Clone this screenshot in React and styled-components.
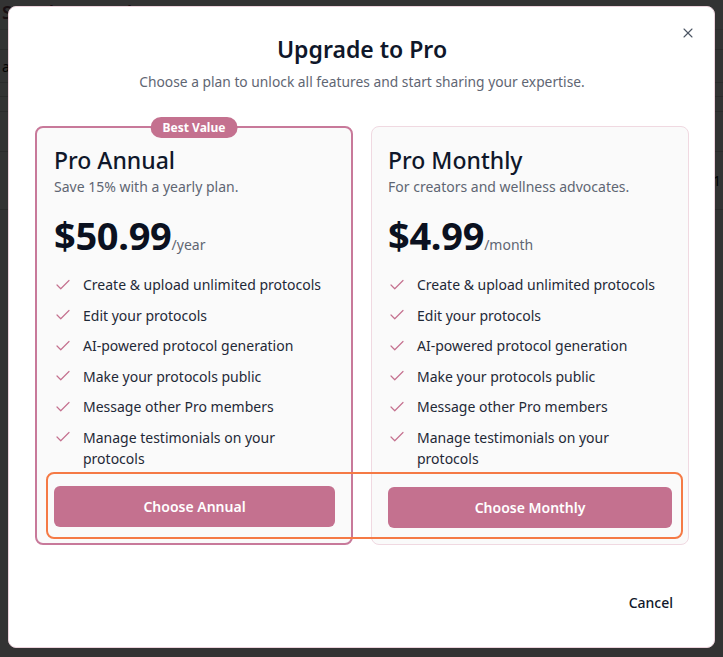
import React from "react";
import styled, { createGlobalStyle } from "styled-components";
import { Check, X } from "lucide-react";

const GlobalStyle = createGlobalStyle`
  * {
    box-sizing: border-box;
  }
  html, body {
    margin: 0;
    padding: 0;
    background: #ffffff;
    font-family: "Segoe UI", "Noto Sans", "Open Sans", sans-serif;
    color: #0f172a;
  }
`;

// page behind the dialog (dimmed)
const Page = styled.div`
  width: 723px;
  height: 657px;
  overflow: hidden;
  background: #ffffff;
`;

const PageTitle = styled.div`
  font-size: 18px;
  font-weight: 600;
  color: #7a4a5c;
  height: 30px;
  line-height: 24px;
  padding-left: 2px;
  border-bottom: 1px solid #e5e5e5;
`;

const PageRow = styled.div`
  height: ${(p) => p.h}px;
  border-bottom: 1px solid #d8d8d8;
  font-size: 14px;
  color: #111;
  display: flex;
  align-items: center;
  justify-content: space-between;
  padding: 0 2px;
`;

const Backdrop = styled.div`
  position: fixed;
  inset: 0;
  background: rgba(0, 0, 0, 0.8);
`;

const Modal = styled.div`
  position: fixed;
  left: 8px;
  top: 6px;
  width: 707px;
  height: 642px;
  background: #ffffff;
  border: 1px solid #ecd3dc;
  border-radius: 8px;
  padding: 26px 25px 25px 26px;
  display: flex;
  flex-direction: column;
`;

const CloseButton = styled.button`
  position: absolute;
  top: 17px;
  right: 17px;
  width: 18px;
  height: 18px;
  padding: 0;
  border: none;
  background: none;
  color: #4b5563;
  display: flex;
  align-items: center;
  justify-content: center;
  cursor: pointer;
`;

const Header = styled.div`
  display: flex;
  flex-direction: column;
  align-items: center;
  gap: 7px;
`;

const Title = styled.h2`
  margin: 0;
  font-size: 23px;
  line-height: 32px;
  font-weight: 600;
  color: #0f172a;
`;

const Subtitle = styled.p`
  margin: 0;
  font-size: 13.8px;
  line-height: 20px;
  color: #5f6673;
`;

const Plans = styled.div`
  display: grid;
  grid-template-columns: 318px 318px;
  gap: 18px;
  margin-top: 34px;
  height: 419px;
`;

const Card = styled.div`
  position: relative;
  display: flex;
  flex-direction: column;
  background: #fafafa;
  border: ${(p) => (p.featured ? "2px solid #c8799a" : "1px solid #f0d9e1")};
  border-radius: 8px;
  padding: ${(p) => (p.featured ? "16px 16px 16px 17px" : "17px 16px 16px 16px")};
`;

const Badge = styled.span`
  position: absolute;
  top: -11px;
  left: 50%;
  transform: translateX(-50%);
  height: 21px;
  padding: 0 12px;
  border-radius: 999px;
  background: #c4718f;
  color: #ffffff;
  font-size: 12px;
  font-weight: 700;
  line-height: 21px;
  white-space: nowrap;
`;

const PlanName = styled.h3`
  margin: 0;
  font-size: 23px;
  line-height: 32px;
  font-weight: 500;
  color: #0f172a;
`;

const PlanNote = styled.p`
  margin: 1px 0 0 0;
  font-size: 14px;
  line-height: 20px;
  color: #5f6673;
`;

const PriceRow = styled.div`
  display: flex;
  align-items: baseline;
  margin-top: 18px;
  height: 40px;
`;

const Price = styled.span`
  font-size: 38px;
  line-height: 40px;
  font-weight: 700;
  color: #0b1120;
  letter-spacing: -0.3px;
`;

const Period = styled.span`
  font-size: 14px;
  color: #5f6673;
`;

const Features = styled.ul`
  list-style: none;
  margin: 19px 0 0 0;
  padding: 0;
  display: flex;
  flex-direction: column;
  gap: 9.5px;
`;

const Feature = styled.li`
  display: flex;
  align-items: flex-start;
  gap: 11px;
  font-size: 14px;
  line-height: 21px;
  color: #1f2937;
`;

const CheckMark = styled.span`
  flex: none;
  display: flex;
  align-items: center;
  height: 21px;
  color: #c4718f;
`;

const ChooseButton = styled.button`
  margin-top: auto;
  height: 41px;
  width: 100%;
  border: none;
  border-radius: 6px;
  background: #c4718f;
  color: #ffffff;
  font-family: inherit;
  font-size: 14px;
  font-weight: 600;
  cursor: pointer;
`;

const Footer = styled.div`
  display: flex;
  justify-content: flex-end;
  margin-top: auto;
`;

const CancelButton = styled.button`
  height: 40px;
  padding: 0 16px;
  border: none;
  background: none;
  font-family: inherit;
  font-size: 14px;
  font-weight: 500;
  color: #0f172a;
  cursor: pointer;
`;

// highlight ring drawn over the two buttons
const Highlight = styled.div`
  position: absolute;
  left: 37px;
  top: 465px;
  width: 637px;
  height: 67px;
  border: 2px solid #f57a45;
  border-radius: 8px;
  pointer-events: none;
`;

const features = [
  "Create & upload unlimited protocols",
  "Edit your protocols",
  "AI-powered protocol generation",
  "Make your protocols public",
  "Message other Pro members",
  "Manage testimonials on your protocols",
];

const plans = [
  {
    id: "annual",
    name: "Pro Annual",
    note: "Save 15% with a yearly plan.",
    price: "$50.99",
    period: "/year",
    cta: "Choose Annual",
    featured: true,
  },
  {
    id: "monthly",
    name: "Pro Monthly",
    note: "For creators and wellness advocates.",
    price: "$4.99",
    period: "/month",
    cta: "Choose Monthly",
    featured: false,
  },
];

const App = () => {
  return (
    <>
      <GlobalStyle />
      <Page>
        <PageTitle>Saved Protocols</PageTitle>
        <PageRow h={20} />
        <PageRow h={33}>a</PageRow>
        <PageRow h={14} />
        <PageRow h={15} />
        <PageRow h={40} />
        <PageRow h={58}>
          <span />
          <span>1</span>
        </PageRow>
      </Page>
      <Backdrop />
      <Modal>
        <CloseButton aria-label="Close">
          <X size={16} strokeWidth={1.6} />
        </CloseButton>
        <Header>
          <Title>Upgrade to Pro</Title>
          <Subtitle>
            Choose a plan to unlock all features and start sharing your expertise.
          </Subtitle>
        </Header>
        <Plans>
          {plans.map((plan) => (
            <Card key={plan.id} featured={plan.featured}>
              {plan.featured && <Badge>Best Value</Badge>}
              <PlanName>{plan.name}</PlanName>
              <PlanNote>{plan.note}</PlanNote>
              <PriceRow>
                <Price>{plan.price}</Price>
                <Period>{plan.period}</Period>
              </PriceRow>
              <Features>
                {features.map((f) => (
                  <Feature key={f}>
                    <CheckMark>
                      <Check size={18} strokeWidth={1.6} />
                    </CheckMark>
                    <span>{f}</span>
                  </Feature>
                ))}
              </Features>
              <ChooseButton>{plan.cta}</ChooseButton>
            </Card>
          ))}
        </Plans>
        <Footer>
          <CancelButton>Cancel</CancelButton>
        </Footer>
        <Highlight />
      </Modal>
    </>
  );
};

export default App;
